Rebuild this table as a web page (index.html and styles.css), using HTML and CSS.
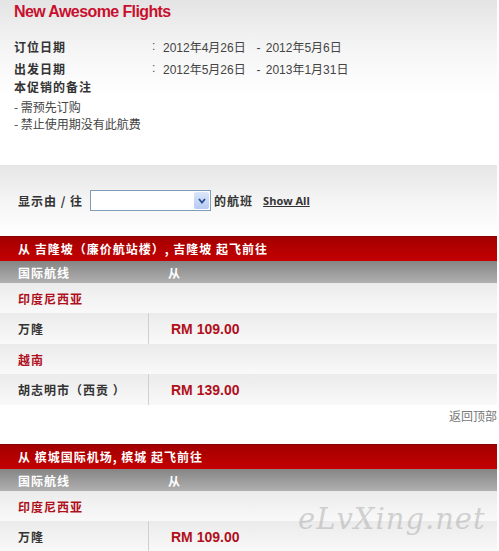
FILE: index.html
```html
<!DOCTYPE html>
<html lang="zh">
<head>
<meta charset="utf-8">
<title>New Awesome Flights</title>
<link rel="stylesheet" href="styles.css">
</head>
<body>
<div class="page">
  <div class="promo">
    <h1 class="title">New Awesome Flights</h1>
    <div class="info">
      <div class="info-row r1"><span class="lbl">订位日期</span><span class="colon">:</span><span class="val">2012年4月26日 &nbsp;- 2012年5月6日</span></div>
      <div class="info-row r2"><span class="lbl">出发日期</span><span class="colon">:</span><span class="val">2012年5月26日 &nbsp;- 2013年1月31日</span></div>
      <div class="info-row r3"><span class="lbl">本促销的备注</span></div>
      <ul class="notes">
        <li>- 需预先订购</li>
        <li>- 禁止使用期没有此航费</li>
      </ul>
    </div>
  </div>

  <div class="filter">
    <span class="flbl">显示由 / 往</span>
    <span class="select"><span class="arrow"><svg width="12" height="14" viewBox="0 0 12 14"><path d="M3 5 L6 8.5 L9 5" fill="none" stroke="#2a4f8f" stroke-width="1.8"/></svg></span></span>
    <span class="flbl">的航班</span>
    <a class="showall" href="#">Show All</a>
  </div>

  <section class="origin">
    <div class="redbar">从 吉隆坡（廉价航站楼）, 吉隆坡 起飞前往</div>
    <div class="graybar"><span class="c1">国际航线</span><span class="c2">从</span></div>
    <div class="row country">印度尼西亚</div>
    <div class="row city"><span class="c1">万隆</span><span class="c2 price">RM 109.00</span></div>
    <div class="row country">越南</div>
    <div class="row city"><span class="c1">胡志明市（西贡 ）</span><span class="c2 price">RM 139.00</span></div>
  </section>
  <div class="totop">返回顶部</div>

  <section class="origin second">
    <div class="redbar">从 槟城国际机场, 槟城 起飞前往</div>
    <div class="graybar"><span class="c1">国际航线</span><span class="c2">从</span></div>
    <div class="row country">印度尼西亚</div>
    <div class="row city"><span class="c1">万隆</span><span class="c2 price">RM 109.00</span></div>
  </section>
  <div class="watermark">eLvXing.net</div>
</div>
</body>
</html>
```
FILE: styles.css
```css
html, body { margin: 0; padding: 0; background: #fff; }
body {
  font-family: "Liberation Sans", Arial, "Noto Sans CJK SC", sans-serif;
  font-size: 12px;
  color: #333;
  overflow: hidden;
}
.page { width: 497px; position: relative; height: 551px; overflow: hidden; }

.promo {
  background: linear-gradient(#e4e4e4 0px, #f4f4f4 45px, #ffffff 95px);
  padding: 3px 0 0 14px;
  height: 162px;
  box-sizing: border-box;
}
.title {
  margin: 0;
  font-size: 16px;
  font-weight: bold;
  color: #c8102e;
  letter-spacing: -0.6px;
  line-height: 18px;
}
.info { margin-top: 16px; }
.info-row { display: flex; align-items: center; height: 18px; }
.info-row.r2 { margin-top: 4px; }
.info-row.r3 { margin-top: 0; }
.lbl {
  width: 138px;
  font-weight: bold;
  color: #333;
  font-family: "Noto Sans CJK SC", sans-serif;
  font-size: 12px;
  letter-spacing: 1px;
}
.colon { width: 11px; color: #555; }
.val { color: #444; font-size: 12px; letter-spacing: 0; word-spacing: 2px; }
.notes { list-style: none; margin: 3px 0 0; padding: 0; color: #444; }
.notes li { height: 17px; line-height: 17px; font-family: "Noto Sans CJK SC", sans-serif; font-size: 12px; }

.filter {
  background: linear-gradient(#e6e6e6 0px, #f6f6f6 40px, #ffffff 70px);
  height: 71px;
  display: flex;
  align-items: center;
  padding: 0 0 0 18px;
  margin-top: 3px;
  box-sizing: border-box;
}
.flbl { font-weight: bold; font-family: "Noto Sans CJK SC", sans-serif; font-size: 12px; color: #333; letter-spacing: 1px; }
.select {
  width: 119px;
  height: 19px;
  border: 1px solid #7f9db9;
  background: #fff;
  margin: 0 3px 0 7px;
  position: relative;
  box-sizing: content-box;
}
.arrow {
  position: absolute;
  right: 1px; top: 1px;
  width: 15px; height: 17px;
  background: linear-gradient(#dbe6fb, #b7cbf2);
  border-radius: 2px;
  display: flex; align-items: center; justify-content: center;
}
.showall {
  margin-left: 10px;
  font-weight: bold;
  font-size: 11px;
  color: #333;
  text-decoration: underline;
  font-family: "Open Sans", "Liberation Sans", sans-serif;
}

.redbar {
  height: 25px;
  background: linear-gradient(#a30000, #c40000);
  color: #fff;
  font-weight: bold;
  font-family: "Noto Sans CJK SC", sans-serif;
  font-size: 12px;
  letter-spacing: 1px;
  line-height: 24px;
  padding-left: 18px;
  border-top: 1px solid #8b0000;
  box-sizing: border-box;
}
.graybar {
  height: 22px;
  background: linear-gradient(#858585, #b0b0b0);
  color: #fff;
  font-weight: bold;
  font-family: "Noto Sans CJK SC", sans-serif;
  letter-spacing: 1px;
  display: flex;
  align-items: center;
}
.c1 { width: 150px; padding-left: 18px; box-sizing: border-box; }
.c2 { padding-left: 18px; }
.row {
  height: 31px;
  background: linear-gradient(#ebebeb, #f9f9f9);
  display: flex;
  align-items: center;
  font-weight: bold;
  font-family: "Noto Sans CJK SC", sans-serif;
  font-size: 12px;
  letter-spacing: 1px;
}
.row.country { color: #b0101c; padding-left: 18px; height: 30px; }
.row.city { color: #333; align-items: stretch; }
.row.city .c1 { display: flex; align-items: center; border-right: 1px solid #d0d0d0; width: 149px; }
.row.city .c2 { display: flex; align-items: center; padding-left: 22px; }
.price {
  color: #b0101c;
  font-family: "Liberation Sans", Arial, sans-serif;
  font-size: 14px;
  letter-spacing: 0;
  font-weight: bold;
}
.totop {
  text-align: right;
  color: #777;
  font-family: "Noto Sans CJK SC", sans-serif;
  font-size: 12px;
  height: 39px;
  line-height: 22px;
}
.watermark {
  position: absolute;
  left: 298px;
  top: 502px;
  font-family: "DejaVu Serif", serif;
  font-style: italic;
  font-size: 29px;
  color: rgba(170,170,170,0.5);
  letter-spacing: 1px;
}
```
